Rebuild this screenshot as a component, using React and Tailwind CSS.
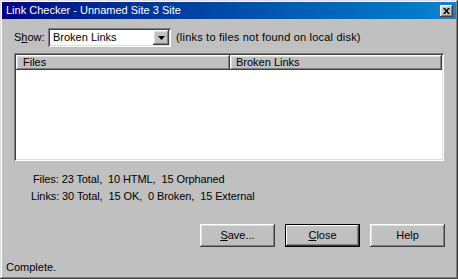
import React from "react";

const raised =
  "shadow-[inset_-1px_-1px_0_#404040,inset_1px_1px_0_#ffffff,inset_-2px_-2px_0_#808080,inset_2px_2px_0_#dfdfdf]";
const sunken =
  "shadow-[inset_1px_1px_0_#808080,inset_-1px_-1px_0_#ffffff,inset_2px_2px_0_#404040,inset_-2px_-2px_0_#dfdfdf]";

function Btn({ children, def }) {
  return (
    <div
      className={
        "w-[75px] h-[23px] flex items-center justify-center bg-[#c0c0c0] text-black " +
        (def
          ? "border border-black shadow-[inset_-1px_-1px_0_#404040,inset_1px_1px_0_#ffffff,inset_-2px_-2px_0_#808080]"
          : raised)
      }
    >
      {children}
    </div>
  );
}

export default function App() {
  return (
    <div
      className="w-[458px] h-[279px] bg-[#c0c0c0] flex flex-col text-[11px] text-black shadow-[inset_-1px_-1px_0_#404040,inset_1px_1px_0_#dfdfdf,inset_-2px_-2px_0_#808080,inset_2px_2px_0_#ffffff]"
      style={{ fontFamily: '"Liberation Sans", Arial, sans-serif' }}
    >
      {/* Title bar */}
      <div className="mx-[2px] mt-[2px] h-[17px] flex items-center bg-gradient-to-r from-[#000080] to-[#1084d0]">
        <span className="pl-[4px] text-white text-[11px] leading-none">
          Link Checker - Unnamed Site 3 Site
        </span>
        <div
          className={
            "ml-auto mr-[3px] w-[13px] h-[12px] bg-[#c0c0c0] flex items-center justify-center " +
            raised
          }
        >
          <svg width="7" height="6" viewBox="0 0 7 6">
            <path d="M0 0h2l1.5 2L5 0h2L4.5 3L7 6H5L3.5 4L2 6H0l2.5-3z" fill="#000" />
          </svg>
        </div>
      </div>

      <div className="px-[14px] flex flex-col">
        {/* Show row */}
        <div className="mt-[9px] h-[19px] flex items-center">
          <span className="w-[34px]">
            S<span className="underline">h</span>ow:
          </span>
          <div className={"w-[123px] h-[19px] bg-white flex items-center p-[2px] " + sunken}>
            <span className="flex-1 pl-[3px] leading-none">Broken Links</span>
            <div
              className={
                "w-[16px] h-[15px] bg-[#c0c0c0] flex items-center justify-center " + raised
              }
            >
              <svg width="7" height="4" viewBox="0 0 7 4">
                <path d="M0 0h7L3.5 4z" fill="#000" />
              </svg>
            </div>
          </div>
          <span className="ml-[5px] tracking-[0.2px]">(links to files not found on local disk)</span>
        </div>

        {/* List view */}
        <div className={"mt-[6px] h-[108px] bg-white p-[2px] " + sunken}>
          <div className="flex h-[15px]">
            <div className={"w-[214px] h-full bg-[#c0c0c0] flex items-center pl-[7px] " + raised}>
              Files
            </div>
            <div className={"flex-1 h-full bg-[#c0c0c0] flex items-center pl-[6px] " + raised}>
              Broken Links
            </div>
          </div>
        </div>

        {/* Stats */}
        <div className="mt-[10px] flex flex-col leading-[17px] whitespace-pre tracking-[-0.1px]">
          <span className="pl-[19px]">Files: 23 Total,  10 HTML,  15 Orphaned</span>
          <span className="pl-[17px]">Links: 30 Total,  15 OK,  0 Broken,  15 External</span>
        </div>

        {/* Buttons */}
        <div className="mt-[19px] flex justify-end gap-[10px] mr-[-1px]">
          <Btn>
            <span>
              <span className="underline">S</span>ave...
            </span>
          </Btn>
          <Btn def>
            <span>
              <span className="underline">C</span>lose
            </span>
          </Btn>
          <Btn>Help</Btn>
        </div>
      </div>

      {/* Status */}
      <div className="mt-auto mb-[4px] pl-[6px] h-[16px] flex items-center">Complete.</div>
    </div>
  );
}
